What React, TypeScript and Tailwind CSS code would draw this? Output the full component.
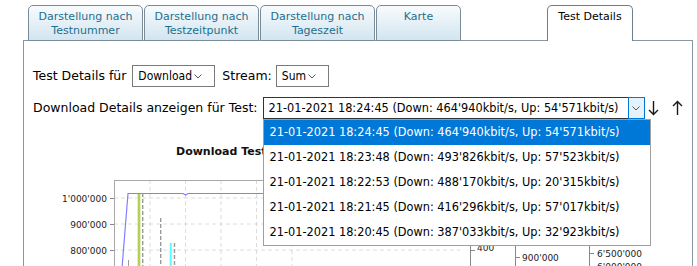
import React from "react";

const label = "font-['DejaVu_Sans',sans-serif] text-[12.5px] text-black";
const selectFont = "font-['DejaVu_Sans_Condensed','Liberation_Sans',sans-serif] text-[12px] text-black";
const optionFont = "font-['DejaVu_Sans_Condensed','Liberation_Sans',sans-serif] text-[12.6px]";

const tabs = [
  { top: "Darstellung nach", bottom: "Testnummer", w: "w-[115px]" },
  { top: "Darstellung nach", bottom: "Testzeitpunkt", w: "w-[115px]" },
  { top: "Darstellung nach", bottom: "Tageszeit", w: "w-[115px]" },
  { top: "Karte", bottom: "", w: "w-[85px]" },
];

const tests = [
  "21-01-2021 18:24:45 (Down: 464'940kbit/s, Up: 54'571kbit/s)",
  "21-01-2021 18:23:48 (Down: 493'826kbit/s, Up: 57'523kbit/s)",
  "21-01-2021 18:22:53 (Down: 488'170kbit/s, Up: 20'315kbit/s)",
  "21-01-2021 18:21:45 (Down: 416'296kbit/s, Up: 57'017kbit/s)",
  "21-01-2021 18:20:45 (Down: 387'033kbit/s, Up: 32'923kbit/s)",
];

function Chevron() {
  return (
    <svg width="8" height="5" viewBox="0 0 8 5" className="shrink-0">
      <path d="M0.5 0.5 L4 4 L7.5 0.5" fill="none" stroke="#555" strokeWidth="1" />
    </svg>
  );
}

function SmallSelect({ value, w }: { value: string; w: string }) {
  return (
    <div className={`${w} h-[22px] border border-[#7a7a7a] bg-white flex items-center pl-[5px] pr-[13px] ${selectFont}`}>
      <span>{value}</span>
      <span className="ml-auto pl-[2px]">
        <Chevron />
      </span>
    </div>
  );
}

function Arrow({ up }: { up?: boolean }) {
  return (
    <svg width="11" height="16" viewBox="0 0 11 16">
      {up ? (
        <path d="M5.5 15 V1.5 M1 6 L5.5 1.5 L10 6" fill="none" stroke="#1a1a1a" strokeWidth="1.4" />
      ) : (
        <path d="M5.5 1 V14.5 M1 10 L5.5 14.5 L10 10" fill="none" stroke="#1a1a1a" strokeWidth="1.4" />
      )}
    </svg>
  );
}

function Chart() {
  const grid = "#dcdcdc";
  return (
    <svg width="668" height="106" viewBox="24 160 668 106" className="block">
      {/* grid */}
      {[198, 224, 250].map((y) => (
        <line key={y} x1="114" x2="460" y1={y} y2={y} stroke={grid} strokeDasharray="4 3" />
      ))}
      {[150, 185.5, 221, 256.5, 292].map((x) => (
        <line key={x} x1={x} x2={x} y1="180" y2="266" stroke={grid} strokeDasharray="4 3" />
      ))}
      {/* frame */}
      <line x1="114.5" x2="114.5" y1="180" y2="266" stroke="#a8a8a8" />
      <line x1="114" x2="460" y1="180.5" y2="180.5" stroke="#a8a8a8" />
      {[198, 224, 250].map((y) => (
        <line key={y} x1="110" x2="114" y1={y + 0.5} y2={y + 0.5} stroke="#888" />
      ))}
      <g fontFamily="DejaVu Sans, sans-serif" fontSize="9" fill="#222" textAnchor="end">
        <text x="107" y="201.5">1'000'000</text>
        <text x="107" y="227.5">900'000</text>
        <text x="107" y="254">800'000</text>
      </g>
      {/* series */}
      <rect x="137.3" y="193" width="3.4" height="73" fill="#d9ecab" />
      <rect x="138" y="193" width="2" height="73" fill="#b3d252" />
      <polyline
        points="122,268 128,193.5 183,193.5 185.5,195 188,193.5 460,193.5"
        fill="none"
        stroke="#8080ff"
        strokeWidth="1.2"
      />
      <line x1="142.7" x2="142.7" y1="193" y2="266" stroke="#9a9a9a" strokeWidth="1.4" strokeDasharray="4 2" />
      <line x1="160.7" x2="160.7" y1="218" y2="266" stroke="#9a9a9a" strokeWidth="1.4" strokeDasharray="4 2" />
      <line x1="174.5" x2="174.5" y1="243" y2="266" stroke="#9a9a9a" strokeWidth="1.4" strokeDasharray="4 2" />
      <line x1="170.7" x2="170.7" y1="243" y2="266" stroke="#55ffff" strokeWidth="2" />
      <line x1="128.5" x2="128.5" y1="260" y2="266" stroke="#9a9a9a" strokeWidth="1" />
      {/* right axes */}
      <line x1="470.5" x2="470.5" y1="180" y2="266" stroke="#888" />
      <line x1="470" x2="475" y1="250.5" y2="250.5" stroke="#888" />
      <line x1="515.5" x2="515.5" y1="180" y2="266" stroke="#888" />
      <line x1="515" x2="520" y1="257.5" y2="257.5" stroke="#888" />
      <line x1="589.5" x2="589.5" y1="180" y2="266" stroke="#888" />
      <line x1="589" x2="594" y1="253.5" y2="253.5" stroke="#888" />
      <g fontFamily="DejaVu Sans, sans-serif" fontSize="9" fill="#222">
        <text x="477" y="251">400</text>
        <text x="522" y="261">900'000</text>
        <text x="597" y="257">6'500'000</text>
        <text x="597" y="270">6'000'000</text>
      </g>
    </svg>
  );
}

export default function App() {
  return (
    <div className="w-[697px] h-[266px] overflow-hidden bg-white">
      <div className="ml-[23px] w-[670px] pt-[5px]">
        {/* tabs */}
        <div className="relative z-10 -mb-px flex items-end gap-[1px] pl-[5px] h-[36px]">
          {tabs.map((t) => (
            <div
              key={t.top + t.bottom}
              className={`${t.w} h-[36px] rounded-t-[5px] border border-[#7a8c99] bg-gradient-to-b from-[#f7fbfd] to-[#d3e5f0] pt-[4px] text-center font-['DejaVu_Sans',sans-serif] text-[11px] leading-[14px] text-[#1d6f8e]`}
            >
              <div>{t.top}</div>
              {t.bottom && <div>{t.bottom}</div>}
            </div>
          ))}
          <div className="ml-[85px] w-[86px] h-[36px] rounded-t-[5px] border border-b-0 border-[#6d7f8c] bg-white pt-[4px] text-center font-['DejaVu_Sans',sans-serif] text-[11px] leading-[14px] text-black">
            Test Details
          </div>
        </div>

        {/* panel */}
        <div className="h-[230px] border border-b-0 border-[#8797a3] pl-[9px] pt-[24px]">
          <div className="flex items-center h-[22px]">
            <span className={label}>Test Details für</span>
            <div className="ml-[6px]">
              <SmallSelect value="Download" w="w-[83px]" />
            </div>
            <span className={`${label} ml-[7px]`}>Stream:</span>
            <div className="ml-[4px]">
              <SmallSelect value="Sum" w="w-[53px]" />
            </div>
          </div>

          <div className="flex items-center h-[22px] mt-[10px]">
            <span className={label}>Download Details anzeigen für Test:</span>
            <div className="relative ml-[5px] z-20">
              <div className="flex w-[382px] h-[22px]">
                <div className={`flex-1 border border-r-0 border-[#333] bg-white flex items-center pl-[5px] ${optionFont} text-black whitespace-nowrap`}>
                  {tests[0]}
                </div>
                <div className="w-[17px] border border-[#0078d7] bg-[#e5f1fb] flex items-center justify-center">
                  <Chevron />
                </div>
              </div>
              <div className="absolute left-0 top-full w-[388px] border border-[#9f9f9f] bg-white">
                {tests.map((t, i) => (
                  <div
                    key={t}
                    className={`h-[25px] flex items-center pl-[6px] whitespace-nowrap ${optionFont} ${
                      i === 0 ? "bg-[#0078d7] text-white" : "text-black"
                    }`}
                  >
                    {t}
                  </div>
                ))}
              </div>
            </div>
            <div className="ml-[3px] flex items-center gap-[13px]">
              <Arrow />
              <Arrow up />
            </div>
          </div>

          <div className="mt-[25px] -ml-[9px] h-[16px] pl-[152px] font-['DejaVu_Sans',sans-serif] text-[11px] font-bold leading-[16px] text-[#111] whitespace-nowrap">
            Download Test Details
          </div>
          <div className="-ml-[9px]">
            <Chart />
          </div>
        </div>
      </div>
    </div>
  );
}
